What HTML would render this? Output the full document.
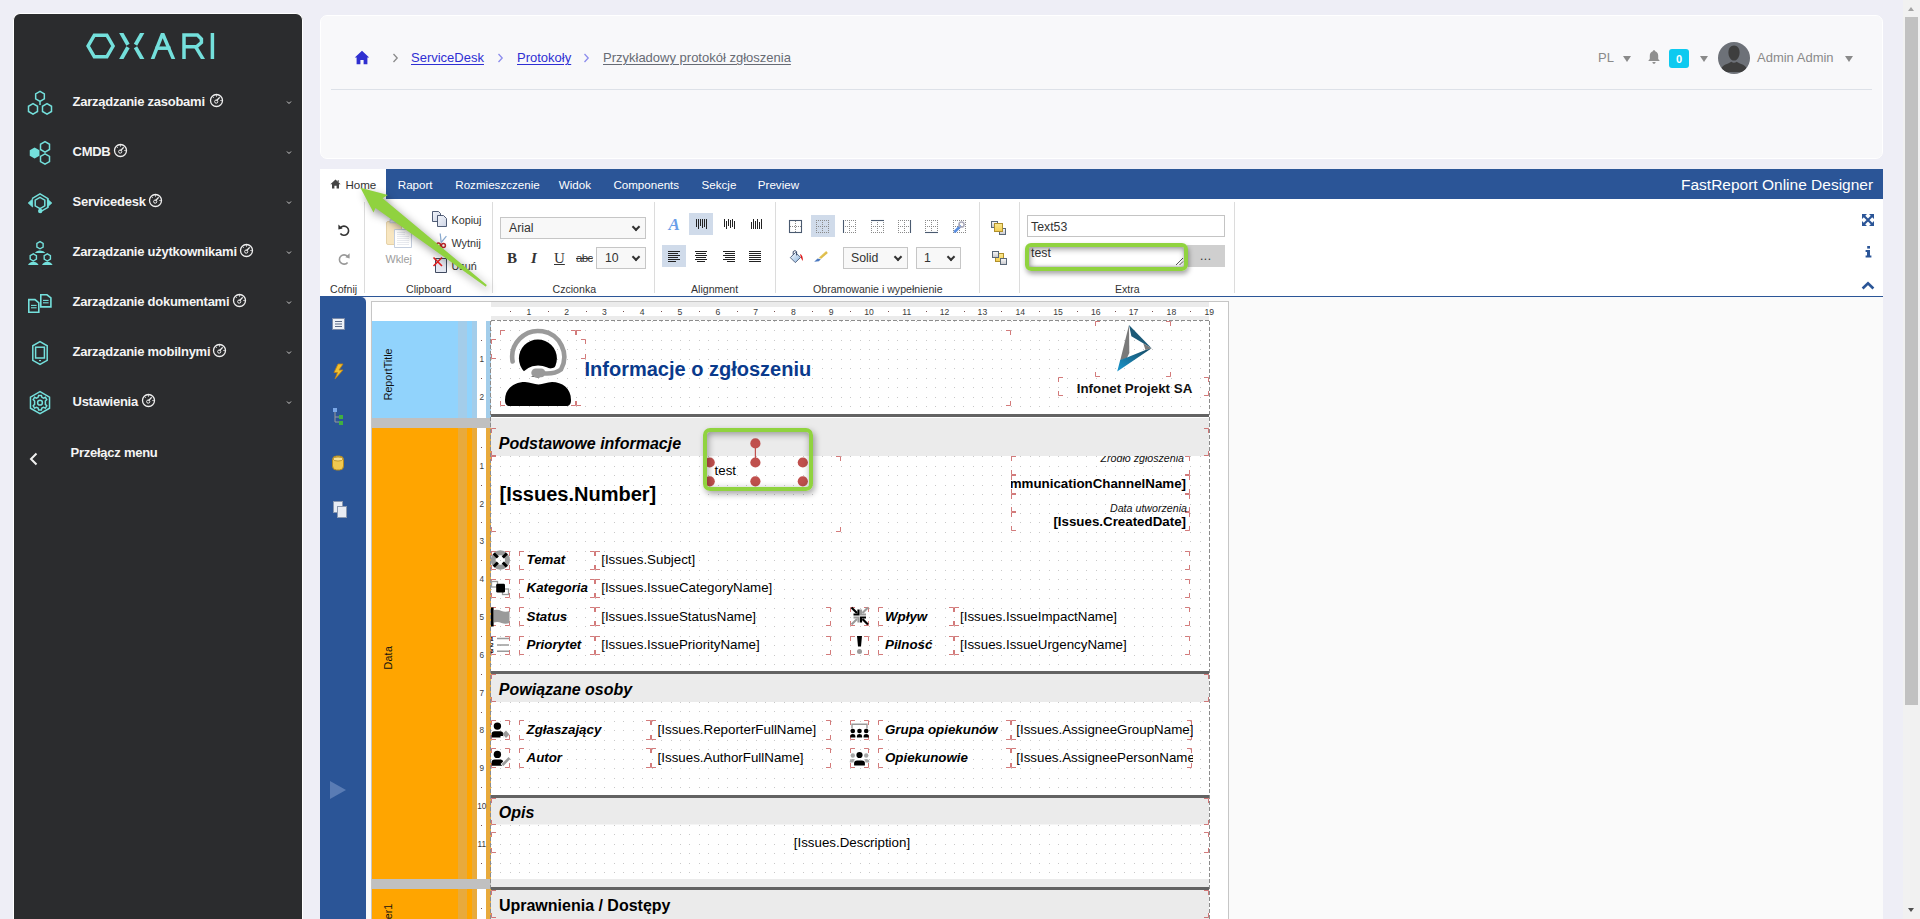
<!DOCTYPE html>
<html><head><meta charset="utf-8">
<style>
*{box-sizing:border-box}
html,body{margin:0;padding:0}
body{width:1920px;height:919px;overflow:hidden;background:#eeeef6;font-family:"Liberation Sans",sans-serif;position:relative}
.a{position:absolute}
/* sidebar */
#sb{left:13px;top:13px;width:290px;height:920px;background:#2b2c2e;border:1px solid #fff;border-bottom:none;border-radius:7px 7px 0 0}
.mi{position:absolute;left:72.5px;color:#f4f4f4;font-weight:bold;font-size:13px;letter-spacing:-0.25px;white-space:nowrap}
.mic{position:absolute;left:28px;width:24px;height:24px}
.chev{position:absolute;left:286px;width:6px;height:4px}
/* header */
#hd{left:320px;top:15px;width:1563px;height:144px;background:#f8f8fa;border:1px solid #fff;border-radius:7px}
/* tabbar */
#tb{left:320px;top:169px;width:1563px;height:30px;background:#2b5597}
.tab{position:absolute;top:178px;color:#fff;font-size:11.6px;white-space:nowrap}
#tool{left:320px;top:199px;width:1563px;height:98px;background:#fff;border-bottom:1px solid #2b5597}
.lbl{position:absolute;top:283px;font-size:10.6px;color:#333;white-space:nowrap}
.dv{position:absolute;top:202px;width:1px;height:91px;background:#dcdcdc}
#lp{left:320px;top:297px;width:46px;height:630px;background:#2b5597;border-top-right-radius:5px}
#da{left:366px;top:297px;width:1517px;height:630px;background:#fafafa}
#sbar{left:1903px;top:0;width:17px;height:919px;background:#f1f1f1}
.bc{top:50px;font-size:13px;text-decoration:underline;text-underline-offset:1.5px;white-space:nowrap}
.hr{top:50px;font-size:13px;color:#8a8a8a;white-space:nowrap}
.tri{top:55.5px;width:0;height:0;border-left:4px solid transparent;border-right:4px solid transparent;border-top:6px solid #8a8a8a}
.tl{font-size:10.8px;color:#333;white-space:nowrap}
.sel{background:#f8f8f8;border:1px solid #c6c6c6}
.sel span{position:absolute;font-size:12.3px;color:#333;white-space:nowrap}
.sel i{position:absolute;width:6px;height:6px;border-right:2px solid #333;border-bottom:2px solid #333;transform:rotate(45deg)}
</style></head><body>

<div id="sb" class="a"></div>
<svg class="a" style="left:0;top:0" width="320" height="480" viewBox="0 0 320 480">
<g fill="none" stroke="#74e0dc">
 <!-- logo -->
 <polygon points="113.10,46.00 106.85,35.17 94.35,35.17 88.10,46.00 94.35,56.83 106.85,56.83" stroke-width="3.5"/>
 <g stroke-width="3.8" stroke-linecap="butt">
  <clipPath id="lc"><rect x="80" y="33" width="140" height="26"/></clipPath>
  <g clip-path="url(#lc)">
   <line x1="119.6" y1="30" x2="128" y2="44.8"/>
   <line x1="128" y1="47.2" x2="119.6" y2="62"/>
   <line x1="143.9" y1="30" x2="135.5" y2="44.8"/>
   <line x1="135.5" y1="47.2" x2="143.9" y2="62"/>
  </g>
 </g>
 <g stroke-width="3.5" clip-path="url(#lc)">
  <polyline points="152.2,60 162.6,33.5 173.8,60" stroke-linejoin="miter"/>
  <line x1="155.5" y1="48.2" x2="170.5" y2="48.2"/>
  <polyline points="184,60 184,35 197.5,35 201.4,39 201.4,42.5 196.5,46.8 184,46.8"/>
  <line x1="195.5" y1="46.5" x2="203.6" y2="60"/>
  <line x1="212.4" y1="33" x2="212.4" y2="60"/>
 </g>
 <!-- icon1 -->
 <g stroke-width="1.5">
  <polygon points="40.00,91.40 35.67,93.90 35.67,98.90 40.00,101.40 44.33,98.90 44.33,93.90"/>
  <polygon points="33.00,103.70 28.50,106.30 28.50,111.50 33.00,114.10 37.50,111.50 37.50,106.30"/>
  <polygon points="47.00,103.70 42.50,106.30 42.50,111.50 47.00,114.10 51.50,111.50 51.50,106.30"/>
  <line x1="40" y1="101.4" x2="40" y2="105"/>
 </g>
 <!-- icon2 cmdb -->
 <polygon points="34.60,147.40 29.75,150.20 29.75,155.80 34.60,158.60 39.45,155.80 39.45,150.20" fill="#74e0dc" stroke="none"/>
 <g stroke-width="1.5">
  <polygon points="45.00,141.70 40.50,144.30 40.50,149.50 45.00,152.10 49.50,149.50 49.50,144.30"/>
  <polygon points="45.00,153.80 40.50,156.40 40.50,161.60 45.00,164.20 49.50,161.60 49.50,156.40"/>
 </g>
 <!-- icon3 servicedesk -->
 <g stroke-width="1.5">
  <polyline points="32,198.6 40,193.9 48,198.6 48,207.3 40.5,211.6"/>
  <polygon points="40,197.4 44.8,200.2 44.8,205.8 40,208.6 35.2,205.8 35.2,200.2"/>
  <line x1="40.2" y1="208.4" x2="40.2" y2="210.5"/>
 </g>
 <polygon points="28.2,203 32.6,199 32.6,207" fill="#74e0dc" stroke="#74e0dc" stroke-width="0.8" stroke-linejoin="round"/>
 <polygon points="51.8,203 47.4,199 47.4,207" fill="#74e0dc" stroke="#74e0dc" stroke-width="0.8" stroke-linejoin="round"/>
 <circle cx="40.2" cy="211" r="2.2" fill="#74e0dc" stroke="none"/>
 <!-- icon4 users -->
 <g stroke-width="1.4">
  <polygon points="40.00,241.60 36.88,243.40 36.88,247.00 40.00,248.80 43.12,247.00 43.12,243.40"/>
  <polygon points="33.30,253.80 30.18,255.60 30.18,259.20 33.30,261.00 36.42,259.20 36.42,255.60"/>
  <polygon points="47.30,253.80 44.18,255.60 44.18,259.20 47.30,261.00 50.42,259.20 50.42,255.60"/>
 </g>
 <g fill="#74e0dc" stroke="none">
  <path d="M35 253 Q36 250.6 40 250.4 Q44 250.6 45.4 253 Z"/>
  <path d="M28 265 Q29.3 262 33.3 261.8 Q37.3 262 38.6 265 Z"/>
  <path d="M42 265 Q43.3 262 47.3 261.8 Q51.3 262 52.6 265 Z"/>
 </g>
 <!-- icon5 docs -->
 <g stroke-width="1.6">
  <path d="M28.8 299.6 H35 L38.8 302.8 V312.2 H28.8 Z"/>
  <path d="M40.8 294.8 H47 L50.9 298 V306.9 H40.8 Z"/>
 </g>
 <g stroke-width="1.1">
  <line x1="31" y1="305.4" x2="36.6" y2="305.4"/><line x1="31" y1="307.8" x2="36.6" y2="307.8"/>
  <line x1="43" y1="300.4" x2="48.6" y2="300.4"/><line x1="43" y1="302.8" x2="48.6" y2="302.8"/>
 </g>
 <!-- icon6 mobile -->
 <g stroke-width="1.5">
  <polygon points="40,341.6 47.2,345.8 47.2,360.4 40,364.4 32.8,360.4 32.8,345.8"/>
  <rect x="35.6" y="347.2" width="8.8" height="10.8"/>
 </g>
 <rect x="39" y="360" width="2" height="1.2" fill="#74e0dc" stroke="none"/>
 <!-- icon7 settings -->
 <g stroke-width="1.5">
  <polygon points="40.00,391.70 30.47,397.20 30.47,408.20 40.00,413.70 49.53,408.20 49.53,397.20"/>
  <circle cx="40" cy="402.7" r="2.4"/>
  <path d="M38.6 395.4 L41.4 395.4 L41.9 397.3 L43.5 398.1 L45.4 397.3 L46.8 399.6 L45.4 401 L45.4 404.4 L46.8 405.8 L45.4 408.1 L43.5 407.3 L41.9 408.1 L41.4 410 L38.6 410 L38.1 408.1 L36.5 407.3 L34.6 408.1 L33.2 405.8 L34.6 404.4 L34.6 401 L33.2 399.6 L34.6 397.3 L36.5 398.1 L38.1 397.3 Z"/>
 </g>
</g>
<!-- chevrons -->
<g fill="none" stroke="#cfcfcf" stroke-width="1">
 <polyline points="287,101.5 289,103.5 291,101.5"/>
 <polyline points="287,151.5 289,153.5 291,151.5"/>
 <polyline points="287,201.5 289,203.5 291,201.5"/>
 <polyline points="287,251.5 289,253.5 291,251.5"/>
 <polyline points="287,301.5 289,303.5 291,301.5"/>
 <polyline points="287,351.5 289,353.5 291,351.5"/>
 <polyline points="287,401.5 289,403.5 291,401.5"/>
</g>
<polyline points="36.5,453.5 31,459 36.5,464.5" fill="none" stroke="#f0f0f0" stroke-width="2"/>
</svg>
<div class="mi" style="top:94px">Zarządzanie zasobami</div>
<svg class="a" style="left:208.5px;top:93.0px" width="15" height="15" viewBox="0 0 15 15"><circle cx="7.5" cy="7.5" r="6" fill="none" stroke="#eee" stroke-width="1.3"/><path d="M7.5 2.3 V3.6 M12.7 7.5 H11.4 M3.8 3.8 L4.7 4.7 M11.2 3.8 L10.3 4.7" stroke="#eee" stroke-width="1"/><path d="M10.4 4.6 L7.5 7.8" stroke="#eee" stroke-width="1.4"/><circle cx="7.2" cy="8.6" r="1.6" fill="none" stroke="#eee" stroke-width="1"/></svg>
<div class="mi" style="top:144px">CMDB</div>
<svg class="a" style="left:113.0px;top:143.0px" width="15" height="15" viewBox="0 0 15 15"><circle cx="7.5" cy="7.5" r="6" fill="none" stroke="#eee" stroke-width="1.3"/><path d="M7.5 2.3 V3.6 M12.7 7.5 H11.4 M3.8 3.8 L4.7 4.7 M11.2 3.8 L10.3 4.7" stroke="#eee" stroke-width="1"/><path d="M10.4 4.6 L7.5 7.8" stroke="#eee" stroke-width="1.4"/><circle cx="7.2" cy="8.6" r="1.6" fill="none" stroke="#eee" stroke-width="1"/></svg>
<div class="mi" style="top:194px">Servicedesk</div>
<svg class="a" style="left:148.1px;top:193.0px" width="15" height="15" viewBox="0 0 15 15"><circle cx="7.5" cy="7.5" r="6" fill="none" stroke="#eee" stroke-width="1.3"/><path d="M7.5 2.3 V3.6 M12.7 7.5 H11.4 M3.8 3.8 L4.7 4.7 M11.2 3.8 L10.3 4.7" stroke="#eee" stroke-width="1"/><path d="M10.4 4.6 L7.5 7.8" stroke="#eee" stroke-width="1.4"/><circle cx="7.2" cy="8.6" r="1.6" fill="none" stroke="#eee" stroke-width="1"/></svg>
<div class="mi" style="top:244px">Zarządzanie użytkownikami</div>
<svg class="a" style="left:238.6px;top:243.0px" width="15" height="15" viewBox="0 0 15 15"><circle cx="7.5" cy="7.5" r="6" fill="none" stroke="#eee" stroke-width="1.3"/><path d="M7.5 2.3 V3.6 M12.7 7.5 H11.4 M3.8 3.8 L4.7 4.7 M11.2 3.8 L10.3 4.7" stroke="#eee" stroke-width="1"/><path d="M10.4 4.6 L7.5 7.8" stroke="#eee" stroke-width="1.4"/><circle cx="7.2" cy="8.6" r="1.6" fill="none" stroke="#eee" stroke-width="1"/></svg>
<div class="mi" style="top:294px">Zarządzanie dokumentami</div>
<svg class="a" style="left:232.1px;top:293.0px" width="15" height="15" viewBox="0 0 15 15"><circle cx="7.5" cy="7.5" r="6" fill="none" stroke="#eee" stroke-width="1.3"/><path d="M7.5 2.3 V3.6 M12.7 7.5 H11.4 M3.8 3.8 L4.7 4.7 M11.2 3.8 L10.3 4.7" stroke="#eee" stroke-width="1"/><path d="M10.4 4.6 L7.5 7.8" stroke="#eee" stroke-width="1.4"/><circle cx="7.2" cy="8.6" r="1.6" fill="none" stroke="#eee" stroke-width="1"/></svg>
<div class="mi" style="top:344px">Zarządzanie mobilnymi</div>
<svg class="a" style="left:212.0px;top:343.0px" width="15" height="15" viewBox="0 0 15 15"><circle cx="7.5" cy="7.5" r="6" fill="none" stroke="#eee" stroke-width="1.3"/><path d="M7.5 2.3 V3.6 M12.7 7.5 H11.4 M3.8 3.8 L4.7 4.7 M11.2 3.8 L10.3 4.7" stroke="#eee" stroke-width="1"/><path d="M10.4 4.6 L7.5 7.8" stroke="#eee" stroke-width="1.4"/><circle cx="7.2" cy="8.6" r="1.6" fill="none" stroke="#eee" stroke-width="1"/></svg>
<div class="mi" style="top:394px">Ustawienia</div>
<svg class="a" style="left:141.3px;top:393.0px" width="15" height="15" viewBox="0 0 15 15"><circle cx="7.5" cy="7.5" r="6" fill="none" stroke="#eee" stroke-width="1.3"/><path d="M7.5 2.3 V3.6 M12.7 7.5 H11.4 M3.8 3.8 L4.7 4.7 M11.2 3.8 L10.3 4.7" stroke="#eee" stroke-width="1"/><path d="M10.4 4.6 L7.5 7.8" stroke="#eee" stroke-width="1.4"/><circle cx="7.2" cy="8.6" r="1.6" fill="none" stroke="#eee" stroke-width="1"/></svg>
<div class="mi" style="top:445px;left:70.5px">Przełącz menu</div>
<div id="hd" class="a"></div>

<!-- breadcrumb -->
<svg class="a" style="left:354px;top:50px" width="16" height="15" viewBox="0 0 16 15"><path d="M8 0.8 L15.2 7.6 L13.4 7.6 L13.4 14.2 L9.6 14.2 L9.6 10 L6.4 10 L6.4 14.2 L2.6 14.2 L2.6 7.6 L0.8 7.6 Z" fill="#2f2fd0"/></svg>
<svg class="a" style="left:392px;top:53px" width="7" height="10" viewBox="0 0 7 10"><polyline points="1.5,1 5.2,5 1.5,9" fill="none" stroke="#8a8a8a" stroke-width="1.3"/></svg>
<div class="a bc" style="left:411px;color:#2f2fd3">ServiceDesk</div>
<svg class="a" style="left:497px;top:53px" width="7" height="10" viewBox="0 0 7 10"><polyline points="1.5,1 5.2,5 1.5,9" fill="none" stroke="#8c8cec" stroke-width="1.3"/></svg>
<div class="a bc" style="left:517px;color:#2f2fd3">Protokoły</div>
<svg class="a" style="left:583px;top:53px" width="7" height="10" viewBox="0 0 7 10"><polyline points="1.5,1 5.2,5 1.5,9" fill="none" stroke="#8c8cec" stroke-width="1.3"/></svg>
<div class="a bc" style="left:603px;color:#676b74">Przykładowy protokół zgłoszenia</div>
<div class="a" style="left:331px;top:89px;width:1541px;height:1px;background:#dde1e8"></div>
<!-- right -->
<div class="a hr" style="left:1598px">PL</div>
<div class="a tri" style="left:1623px"></div>
<svg class="a" style="left:1647px;top:49px" width="14" height="16" viewBox="0 0 14 16"><path d="M7 1.2 C7.8 1.2 8.2 1.7 8.2 2.3 C10.3 2.9 11.2 4.6 11.2 6.8 L11.2 10 L12.8 12 L1.2 12 L2.8 10 L2.8 6.8 C2.8 4.6 3.7 2.9 5.8 2.3 C5.8 1.7 6.2 1.2 7 1.2 Z M5.4 13 L8.6 13 C8.6 14 7.9 14.8 7 14.8 C6.1 14.8 5.4 14 5.4 13 Z" fill="#8f8f8f"/></svg>
<div class="a" style="left:1669px;top:49px;width:20px;height:19px;background:#0dcaf0;border-radius:3px;color:#fff;font-weight:bold;font-size:11px;text-align:center;line-height:20px">0</div>
<div class="a tri" style="left:1700px"></div>
<svg class="a" style="left:1718px;top:42px" width="32" height="32" viewBox="0 0 32 32"><defs><clipPath id="av"><circle cx="16" cy="16" r="16"/></clipPath></defs><circle cx="16" cy="16" r="16" fill="#6d7178"/><g clip-path="url(#av)" fill="#3e3e3e"><path d="M16 3.5 C19.6 3.5 21.6 6.4 21.6 10.5 C21.6 14.4 19.5 18.6 16 18.6 C12.5 18.6 10.4 14.4 10.4 10.5 C10.4 6.4 12.4 3.5 16 3.5 Z"/><path d="M2 30 C3 24.4 6 23 10.6 21.2 L13.4 19.8 C15 21.2 17 21.2 18.6 19.8 L21.4 21.2 C26 23 29 24.4 30 30 Z"/></g></svg>
<div class="a hr" style="left:1757px">Admin Admin</div>
<div class="a tri" style="left:1845px"></div>
<div id="tb" class="a"></div>
<div id="tool" class="a"></div>
<div class="a" style="left:320px;top:169px;width:66px;height:30px;background:#fff"></div>
<svg class="a" style="left:330px;top:179px" width="11" height="10" viewBox="0 0 11 10"><path d="M5.5 0.6 L10.6 5.2 L9 5.2 L9 9.6 L6.6 9.6 L6.6 6.8 L4.4 6.8 L4.4 9.6 L2 9.6 L2 5.2 L0.4 5.2 Z M7.6 1.2 H8.8 V3.2 L7.6 2.2 Z" fill="#444"/></svg>
<div class="tab" style="left:345.4px;color:#333">Home</div>
<div class="tab" style="left:397.8px">Raport</div>
<div class="tab" style="left:455.3px">Rozmieszczenie</div>
<div class="tab" style="left:558.75px">Widok</div>
<div class="tab" style="left:613.4px">Components</div>
<div class="tab" style="left:701.6px">Sekcje</div>
<div class="tab" style="left:757.8px">Preview</div>
<div class="tab" style="left:1681px;top:176px;font-size:15.5px">FastReport Online Designer</div>

<!-- dividers -->
<div class="dv" style="left:364px"></div>
<div class="dv" style="left:492px"></div>
<div class="dv" style="left:654px"></div>
<div class="dv" style="left:775px"></div>
<div class="dv" style="left:979px"></div>
<div class="dv" style="left:1019px"></div>
<div class="dv" style="left:1234px"></div>
<!-- labels -->
<div class="lbl" style="left:330px">Cofnij</div>
<div class="lbl" style="left:406px">Clipboard</div>
<div class="lbl" style="left:552.5px">Czcionka</div>
<div class="lbl" style="left:691px">Alignment</div>
<div class="lbl" style="left:813px">Obramowanie i wypełnienie</div>
<div class="lbl" style="left:1115px">Extra</div>
<!-- undo redo -->
<svg class="a" style="left:336px;top:222px" width="16" height="44" viewBox="0 0 16 44">
 <path d="M4.6 5.6 A4.6 4.6 0 1 1 4.4 11.6" fill="none" stroke="#333" stroke-width="1.6"/>
 <path d="M2.4 2.4 L6.6 6.4 L2.4 7.6 Z" fill="#333"/>
 <path d="M11.4 34.4 A4.6 4.6 0 1 0 11.6 40.4" fill="none" stroke="#999" stroke-width="1.6"/>
 <path d="M13.6 31.2 L9.4 35.2 L13.6 36.4 Z" fill="#999"/>
</svg>
<!-- paste -->
<svg class="a" style="left:385px;top:219px" width="28" height="30" viewBox="0 0 28 30">
 <rect x="1.5" y="2.5" width="15" height="23" rx="1.5" fill="#f8e6c0" stroke="#e6d2a8"/>
 <rect x="5" y="0.8" width="8" height="3" fill="#e8e8f0" stroke="#bcc4d4" stroke-width="0.8"/>
 <path d="M9.5 10.5 H22.5 L26.5 14.5 V28.5 H9.5 Z" fill="#fff" stroke="#c4cede"/>
 <g stroke="#d8dce4" stroke-width="0.6"><line x1="12" y1="13.5" x2="20" y2="13.5"/><line x1="12" y1="15.5" x2="20" y2="15.5"/><line x1="12" y1="17.5" x2="24" y2="17.5"/><line x1="12" y1="19.5" x2="24" y2="19.5"/><line x1="12" y1="21.5" x2="24" y2="21.5"/><line x1="12" y1="23.5" x2="24" y2="23.5"/><line x1="12" y1="25.5" x2="24" y2="25.5"/></g>
</svg>
<div class="a" style="left:385.5px;top:252.5px;font-size:10.8px;color:#9c9c9c">Wklej</div>
<!-- copy -->
<svg class="a" style="left:431px;top:210px" width="18" height="18" viewBox="0 0 18 18">
 <defs><linearGradient id="dq" x1="0" y1="0" x2="1" y2="1"><stop offset="0" stop-color="#f4f6fb"/><stop offset="1" stop-color="#cdd4e4"/></linearGradient></defs>
 <path d="M1.5 1.5 H7.5 L9.5 3.5 V11.5 H1.5 Z" fill="url(#dq)" stroke="#3e4c68" stroke-width="0.9"/>
 <path d="M6.5 5.5 H12.5 L15.5 8.5 V16.5 H6.5 Z" fill="url(#dq)" stroke="#3e4c68" stroke-width="0.9"/>
</svg>
<div class="a tl" style="left:451.5px;top:213.5px">Kopiuj</div>
<!-- cut -->
<svg class="a" style="left:432px;top:232px" width="18" height="20" viewBox="432 232 18 20">
 <path d="M440.2 233.5 L441.2 242.5" stroke="#8aaad0" stroke-width="1.2" fill="none"/>
 <path d="M446.4 236.2 L441.2 242.5" stroke="#8aaad0" stroke-width="1.2" fill="none"/>
 <circle cx="438.4" cy="245" r="2" fill="none" stroke="#c02828" stroke-width="1.5"/>
 <circle cx="443.4" cy="245.6" r="2" fill="none" stroke="#c02828" stroke-width="1.5"/>
</svg>
<div class="a tl" style="left:451.5px;top:236.5px">Wytnij</div>
<!-- delete -->
<svg class="a" style="left:432px;top:256px" width="17" height="18" viewBox="0 0 17 18">
 <path d="M3.5 2.5 H14.5 V16.5 H3.5 Z" fill="#e4e8f2" stroke="#404a60"/>
 <path d="M1.5 1.5 L10 10 M10 1.5 L1.5 10" stroke="#e02020" stroke-width="1.6"/>
</svg>
<div class="a tl" style="left:451.5px;top:259.5px">Usuń</div>
<!-- font -->
<div class="a sel" style="left:500px;top:217px;width:146px;height:22px"><span style="left:8px;top:3px">Arial</span><i style="left:132px;top:6px"></i></div>
<div class="a sel" style="left:596px;top:247px;width:50px;height:22px"><span style="left:8px;top:3px">10</span><i style="left:36px;top:6px"></i></div>
<div class="a" style="left:507px;top:250px;font-family:'Liberation Serif';font-weight:bold;font-size:15px;color:#333">B</div>
<div class="a" style="left:531px;top:250px;font-family:'Liberation Serif';font-style:italic;font-weight:bold;font-size:15px;color:#333">I</div>
<div class="a" style="left:554px;top:250px;font-family:'Liberation Serif';font-size:15px;color:#333;text-decoration:underline">U</div>
<div class="a" style="left:576px;top:252px;font-size:11.5px;color:#333;text-decoration:line-through;letter-spacing:-0.6px">abc</div>
<!-- alignment -->
<div class="a" style="left:689px;top:213px;width:24px;height:22px;background:#d0dbea"></div>
<div class="a" style="left:662px;top:245px;width:24px;height:22px;background:#d0dbea"></div>
<svg class="a" style="left:664px;top:213px" width="110" height="56" viewBox="0 0 110 56">
 <text x="4.5" y="16.5" font-family="Liberation Serif" font-style="italic" font-weight="bold" font-size="17" fill="#6a9ee8">A</text>
 <g stroke="#222" stroke-width="1">
  <path d="M32.5 6 V14 M34.5 6 V16 M36.5 6 V13 M38.5 6 V15 M40.5 6 V14 M42.5 6 V16"/>
  <path d="M60.5 6 V14 M62.5 8 V16 M64.5 6 V13 M66.5 7 V15 M68.5 6 V14 M70.5 8 V16"/>
  <path d="M87.5 9 V16 M89.5 6 V16 M91.5 8 V16 M93.5 6 V16 M95.5 9 V16 M97.5 6 V16"/>
 </g>
 <g stroke="#222" stroke-width="1">
  <path d="M4 38.5 H16 M4 40.5 H14 M4 42.5 H16 M4 44.5 H14 M4 46.5 H16 M4 48.5 H12"/>
  <path d="M31 38.5 H43 M32 40.5 H42 M31 42.5 H43 M32 44.5 H42 M31 46.5 H43 M33 48.5 H41"/>
  <path d="M59 38.5 H71 M61 40.5 H71 M59 42.5 H71 M61 44.5 H71 M59 46.5 H71 M63 48.5 H71"/>
  <path d="M85 38.5 H97 M85 40.5 H97 M85 42.5 H97 M85 44.5 H97 M85 46.5 H97 M85 48.5 H97"/>
 </g>
</svg>
<!-- border -->
<div class="a" style="left:811px;top:215px;width:24px;height:22px;background:#d0dbea"></div>
<svg class="a" style="left:788px;top:219px" width="180" height="16" viewBox="0 0 180 16">
 <g fill="none" stroke="#8a8a8a" stroke-width="1" stroke-dasharray="1 1"><path d="M2 7.5 H13 M7.5 2 V13"/><path d="M28 1.5 H41 M28 13.5 H41 M28 7.5 H41 M28.5 1 V14 M40.5 1 V14 M34.5 1 V14"/><path d="M55 1.5 H68 M55 13.5 H68 M55 7.5 H68 M55.5 1 V14 M67.5 1 V14 M61.5 1 V14"/><path d="M83 1.5 H96 M83 13.5 H96 M83 7.5 H96 M83.5 1 V14 M95.5 1 V14 M89.5 1 V14"/><path d="M110 1.5 H123 M110 13.5 H123 M110 7.5 H123 M110.5 1 V14 M122.5 1 V14 M116.5 1 V14"/><path d="M137 1.5 H150 M137 13.5 H150 M137 7.5 H150 M137.5 1 V14 M149.5 1 V14 M143.5 1 V14"/><path d="M165 1.5 H178 M165 13.5 H178 M165 7.5 H178 M165.5 1 V14 M177.5 1 V14 M171.5 1 V14"/></g>
 <g fill="none" stroke="#4a5a70" stroke-width="1.1">
  <rect x="1.5" y="1.5" width="12" height="12"/>
  <path d="M55.5 1 V14"/><path d="M83 1.5 H96"/><path d="M122.5 1 V14"/><path d="M137 13.5 H150"/>
 </g>
 <path d="M167 12.5 L172 7.5" stroke="#5a8ee0" stroke-width="2.6" stroke-linecap="round"/>
 <circle cx="173.5" cy="5.5" r="2.6" fill="none" stroke="#aab" stroke-width="1.5"/>
</svg>
<svg class="a" style="left:785px;top:244px" width="50" height="26" viewBox="785 244 50 26">
 <defs><linearGradient id="bk" x1="0" y1="0" x2="1" y2="1"><stop offset="0" stop-color="#ffffff"/><stop offset="1" stop-color="#8ab4e0"/></linearGradient>
 <linearGradient id="br" x1="0" y1="0" x2="1" y2="1"><stop offset="0" stop-color="#f8e880"/><stop offset="1" stop-color="#c89820"/></linearGradient></defs>
 <path d="M790.3 257.6 L795.5 252.5 L800.6 257.4 L795.3 262.6 Z" fill="url(#bk)" stroke="#4a5a78" stroke-width="0.9"/>
 <path d="M793.2 254.6 V251.6 Q795 249.6 796.6 251.6 V255.4" fill="none" stroke="#3a4a6a" stroke-width="1"/>
 <path d="M800 254 Q803.4 255.5 802.6 261 L801.2 258.2 Z" fill="#e01010"/>
 <path d="M814.2 261.8 L817.6 258.4 L820.8 259 L819 261.2 Z" fill="#4a78c0"/>
 <path d="M817.6 258.4 L819 257.4 L821.2 258.8 L820.8 259 Z" fill="#f0e8c8"/>
 <path d="M819 257.4 L826.2 251 L827.8 253 L821.2 258.8 Z" fill="url(#br)"/>
</svg>
<div class="a sel" style="left:843px;top:247px;width:65px;height:22px"><span style="left:7px;top:3px">Solid</span><i style="left:51px;top:6px"></i></div>
<div class="a sel" style="left:916px;top:247px;width:45px;height:22px"><span style="left:7px;top:3px">1</span><i style="left:31px;top:6px"></i></div>
<!-- layers -->
<svg class="a" style="left:984px;top:214px" width="30" height="56" viewBox="984 214 30 56">
 <defs><linearGradient id="gq" x1="0" y1="0" x2="0" y2="1"><stop offset="0" stop-color="#fafafa"/><stop offset="1" stop-color="#c8c8cc"/></linearGradient>
 <linearGradient id="yq" x1="0" y1="0" x2="0" y2="1"><stop offset="0" stop-color="#fbe890"/><stop offset="1" stop-color="#f0cc50"/></linearGradient></defs>
 <g stroke-width="1">
  <rect x="991.5" y="221.5" width="6" height="6" fill="url(#gq)" stroke="#5a6878"/>
  <rect x="999.5" y="228.5" width="6" height="6" fill="url(#gq)" stroke="#5a6878"/>
  <rect x="994.5" y="223.5" width="8" height="8" fill="url(#yq)" stroke="#b0902c"/>
  <rect x="995.5" y="253.5" width="8" height="8" fill="url(#yq)" stroke="#b0902c"/>
  <rect x="992.5" y="251.5" width="6" height="6" fill="url(#gq)" stroke="#5a6878"/>
  <rect x="1000.5" y="258.5" width="6" height="6" fill="url(#gq)" stroke="#5a6878"/>
 </g>
</svg>
<!-- extra -->
<div class="a" style="left:1027px;top:215px;width:198px;height:22px;background:#fff;border:1px solid #c4c4c4"></div>
<div class="a" style="left:1031px;top:220px;font-size:12.3px;color:#333">Text53</div>
<div class="a" style="left:1187px;top:245px;width:38px;height:22px;background:#cfcfcf"></div>
<div class="a" style="left:1200px;top:249px;font-size:12px;color:#333;letter-spacing:0.5px">...</div>
<div class="a" style="left:1028px;top:246px;width:157px;height:21px;background:#fff;box-shadow:inset 0 0 3px rgba(0,0,0,0.35)"></div>
<div class="a" style="left:1031px;top:246px;font-size:12.3px;color:#333">test</div>
<svg class="a" style="left:1174px;top:256px" width="10" height="10" viewBox="0 0 10 10"><path d="M9 2 L2 9 M9 5.5 L5.5 9" stroke="#555" stroke-width="1"/></svg>
<div class="a" style="left:1025px;top:243px;width:163px;height:28px;border:4px solid #90d33f;border-radius:6px;box-shadow:1px 3px 5px rgba(0,0,0,0.35), inset 1px 2px 6px rgba(0,0,0,0.4)"></div>
<!-- right icons -->
<svg class="a" style="left:1861px;top:213px" width="14" height="78" viewBox="0 0 14 78">
 <g fill="#2b5597">
  <path d="M3 3 L11 11 M11 3 L3 11" stroke="#2b5597" stroke-width="2.2"/>
  <path d="M1 1 H6 L1 6 Z M13 1 V6 L8 1 Z M1 13 V8 L6 13 Z M13 13 H8 L13 8 Z"/>
  <rect x="6.2" y="33" width="2.8" height="2.6"/><path d="M4.6 37 H9 V42.6 H10.4 V44.6 H4.6 V42.6 H6 V39 H4.6 Z"/>
 </g>
 <polyline points="1.6,75.5 7,70.2 12.4,75.5" fill="none" stroke="#2b5597" stroke-width="2.6"/>
</svg>
<div id="lp" class="a"></div>
<div id="da" class="a"></div>
<svg class="a" style="left:0;top:0" width="1920" height="919" viewBox="0 0 1920 919" font-family="Liberation Sans"><rect x="371.5" y="301.5" width="857" height="640" fill="#fff" stroke="#c6c6c6" stroke-width="1"/>
<rect x="372" y="321" width="105" height="97" fill="#91d3fc"/>
<rect x="458" y="321" width="9" height="97" fill="#a3cdea"/>
<rect x="472" y="321" width="5" height="97" fill="#a3cdea"/>
<rect x="486" y="321" width="5" height="97" fill="#a3cdea"/>
<rect x="372" y="428" width="105" height="451" fill="#ffa500"/>
<rect x="458" y="428" width="9" height="451" fill="#e8aa3c"/>
<rect x="472" y="428" width="5" height="451" fill="#e8aa3c"/>
<rect x="486" y="428" width="5" height="451" fill="#e8aa3c"/>
<rect x="372" y="889" width="105" height="36" fill="#ffa500"/>
<rect x="458" y="889" width="9" height="36" fill="#e8aa3c"/>
<rect x="472" y="889" width="5" height="36" fill="#e8aa3c"/>
<rect x="486" y="889" width="5" height="36" fill="#e8aa3c"/>
<rect x="372" y="418" width="119" height="10" fill="#c0c0c0"/>
<rect x="372" y="879" width="119" height="10" fill="#c0c0c0"/>
<text transform="translate(392.2,400.3) rotate(-90)" font-size="10.67" fill="#111">ReportTitle</text>
<text transform="translate(392.3,669.6) rotate(-90)" font-size="10.67" fill="#111" letter-spacing="0.3">Data</text>
<text transform="translate(392.3,963) rotate(-90)" font-size="10.67" fill="#111">DataFooter1</text>
<rect x="491" y="302" width="718" height="5" fill="#ebebeb"/>
<rect x="491" y="316" width="718" height="4" fill="#ebebeb"/>
<g font-size="8.6" fill="#3a3a3a" font-family="Liberation Sans"><text x="528.8" y="315" text-anchor="middle">1</text><rect x="510" y="311" width="1" height="1" fill="#7a5050"/><text x="566.6" y="315" text-anchor="middle">2</text><rect x="548" y="311" width="1" height="1" fill="#7a5050"/><text x="604.4" y="315" text-anchor="middle">3</text><rect x="586" y="311" width="1" height="1" fill="#7a5050"/><text x="642.2" y="315" text-anchor="middle">4</text><rect x="623" y="311" width="1" height="1" fill="#7a5050"/><text x="680.0" y="315" text-anchor="middle">5</text><rect x="661" y="311" width="1" height="1" fill="#7a5050"/><text x="717.8" y="315" text-anchor="middle">6</text><rect x="699" y="311" width="1" height="1" fill="#7a5050"/><text x="755.6" y="315" text-anchor="middle">7</text><rect x="737" y="311" width="1" height="1" fill="#7a5050"/><text x="793.4" y="315" text-anchor="middle">8</text><rect x="774" y="311" width="1" height="1" fill="#7a5050"/><text x="831.2" y="315" text-anchor="middle">9</text><rect x="812" y="311" width="1" height="1" fill="#7a5050"/><text x="869.0" y="315" text-anchor="middle">10</text><rect x="850" y="311" width="1" height="1" fill="#7a5050"/><text x="906.8" y="315" text-anchor="middle">11</text><rect x="888" y="311" width="1" height="1" fill="#7a5050"/><text x="944.6" y="315" text-anchor="middle">12</text><rect x="926" y="311" width="1" height="1" fill="#7a5050"/><text x="982.4" y="315" text-anchor="middle">13</text><rect x="964" y="311" width="1" height="1" fill="#7a5050"/><text x="1020.2" y="315" text-anchor="middle">14</text><rect x="1001" y="311" width="1" height="1" fill="#7a5050"/><text x="1058.0" y="315" text-anchor="middle">15</text><rect x="1039" y="311" width="1" height="1" fill="#7a5050"/><text x="1095.8" y="315" text-anchor="middle">16</text><rect x="1077" y="311" width="1" height="1" fill="#7a5050"/><text x="1133.6" y="315" text-anchor="middle">17</text><rect x="1115" y="311" width="1" height="1" fill="#7a5050"/><text x="1171.4" y="315" text-anchor="middle">18</text><rect x="1152" y="311" width="1" height="1" fill="#7a5050"/><text x="1209.2" y="315" text-anchor="middle">19</text><rect x="1190" y="311" width="1" height="1" fill="#7a5050"/></g>
<g font-size="8.2" fill="#3a3a3a"><rect x="481" y="340" width="1" height="1" fill="#7a5050"/><text x="481.8" y="361.8" text-anchor="middle">1</text><rect x="481" y="378" width="1" height="1" fill="#7a5050"/><text x="481.8" y="399.6" text-anchor="middle">2</text><rect x="481" y="447" width="1" height="1" fill="#7a5050"/><text x="481.8" y="468.8" text-anchor="middle">1</text><rect x="481" y="485" width="1" height="1" fill="#7a5050"/><text x="481.8" y="506.6" text-anchor="middle">2</text><rect x="481" y="522" width="1" height="1" fill="#7a5050"/><text x="481.8" y="544.4" text-anchor="middle">3</text><rect x="481" y="560" width="1" height="1" fill="#7a5050"/><text x="481.8" y="582.2" text-anchor="middle">4</text><rect x="481" y="598" width="1" height="1" fill="#7a5050"/><text x="481.8" y="620.0" text-anchor="middle">5</text><rect x="481" y="636" width="1" height="1" fill="#7a5050"/><text x="481.8" y="657.8" text-anchor="middle">6</text><rect x="481" y="674" width="1" height="1" fill="#7a5050"/><text x="481.8" y="695.6" text-anchor="middle">7</text><rect x="481" y="712" width="1" height="1" fill="#7a5050"/><text x="481.8" y="733.4" text-anchor="middle">8</text><rect x="481" y="749" width="1" height="1" fill="#7a5050"/><text x="481.8" y="771.2" text-anchor="middle">9</text><rect x="481" y="787" width="1" height="1" fill="#7a5050"/><text x="481.8" y="809.0" text-anchor="middle">10</text><rect x="481" y="825" width="1" height="1" fill="#7a5050"/><text x="481.8" y="846.8" text-anchor="middle">11</text><rect x="481" y="863" width="1" height="1" fill="#7a5050"/><rect x="481" y="908" width="1" height="1" fill="#7a5050"/></g>
<defs><pattern id="g1" x="491" y="321" width="189" height="189" patternUnits="userSpaceOnUse"><path d="M0 0h1v1h-1zM0 9h1v1h-1zM0 19h1v1h-1zM0 28h1v1h-1zM0 38h1v1h-1zM0 47h1v1h-1zM0 57h1v1h-1zM0 66h1v1h-1zM0 76h1v1h-1zM0 85h1v1h-1zM0 94h1v1h-1zM0 104h1v1h-1zM0 113h1v1h-1zM0 123h1v1h-1zM0 132h1v1h-1zM0 142h1v1h-1zM0 151h1v1h-1zM0 161h1v1h-1zM0 170h1v1h-1zM0 180h1v1h-1zM9 0h1v1h-1zM9 9h1v1h-1zM9 19h1v1h-1zM9 28h1v1h-1zM9 38h1v1h-1zM9 47h1v1h-1zM9 57h1v1h-1zM9 66h1v1h-1zM9 76h1v1h-1zM9 85h1v1h-1zM9 94h1v1h-1zM9 104h1v1h-1zM9 113h1v1h-1zM9 123h1v1h-1zM9 132h1v1h-1zM9 142h1v1h-1zM9 151h1v1h-1zM9 161h1v1h-1zM9 170h1v1h-1zM9 180h1v1h-1zM19 0h1v1h-1zM19 9h1v1h-1zM19 19h1v1h-1zM19 28h1v1h-1zM19 38h1v1h-1zM19 47h1v1h-1zM19 57h1v1h-1zM19 66h1v1h-1zM19 76h1v1h-1zM19 85h1v1h-1zM19 94h1v1h-1zM19 104h1v1h-1zM19 113h1v1h-1zM19 123h1v1h-1zM19 132h1v1h-1zM19 142h1v1h-1zM19 151h1v1h-1zM19 161h1v1h-1zM19 170h1v1h-1zM19 180h1v1h-1zM28 0h1v1h-1zM28 9h1v1h-1zM28 19h1v1h-1zM28 28h1v1h-1zM28 38h1v1h-1zM28 47h1v1h-1zM28 57h1v1h-1zM28 66h1v1h-1zM28 76h1v1h-1zM28 85h1v1h-1zM28 94h1v1h-1zM28 104h1v1h-1zM28 113h1v1h-1zM28 123h1v1h-1zM28 132h1v1h-1zM28 142h1v1h-1zM28 151h1v1h-1zM28 161h1v1h-1zM28 170h1v1h-1zM28 180h1v1h-1zM38 0h1v1h-1zM38 9h1v1h-1zM38 19h1v1h-1zM38 28h1v1h-1zM38 38h1v1h-1zM38 47h1v1h-1zM38 57h1v1h-1zM38 66h1v1h-1zM38 76h1v1h-1zM38 85h1v1h-1zM38 94h1v1h-1zM38 104h1v1h-1zM38 113h1v1h-1zM38 123h1v1h-1zM38 132h1v1h-1zM38 142h1v1h-1zM38 151h1v1h-1zM38 161h1v1h-1zM38 170h1v1h-1zM38 180h1v1h-1zM47 0h1v1h-1zM47 9h1v1h-1zM47 19h1v1h-1zM47 28h1v1h-1zM47 38h1v1h-1zM47 47h1v1h-1zM47 57h1v1h-1zM47 66h1v1h-1zM47 76h1v1h-1zM47 85h1v1h-1zM47 94h1v1h-1zM47 104h1v1h-1zM47 113h1v1h-1zM47 123h1v1h-1zM47 132h1v1h-1zM47 142h1v1h-1zM47 151h1v1h-1zM47 161h1v1h-1zM47 170h1v1h-1zM47 180h1v1h-1zM57 0h1v1h-1zM57 9h1v1h-1zM57 19h1v1h-1zM57 28h1v1h-1zM57 38h1v1h-1zM57 47h1v1h-1zM57 57h1v1h-1zM57 66h1v1h-1zM57 76h1v1h-1zM57 85h1v1h-1zM57 94h1v1h-1zM57 104h1v1h-1zM57 113h1v1h-1zM57 123h1v1h-1zM57 132h1v1h-1zM57 142h1v1h-1zM57 151h1v1h-1zM57 161h1v1h-1zM57 170h1v1h-1zM57 180h1v1h-1zM66 0h1v1h-1zM66 9h1v1h-1zM66 19h1v1h-1zM66 28h1v1h-1zM66 38h1v1h-1zM66 47h1v1h-1zM66 57h1v1h-1zM66 66h1v1h-1zM66 76h1v1h-1zM66 85h1v1h-1zM66 94h1v1h-1zM66 104h1v1h-1zM66 113h1v1h-1zM66 123h1v1h-1zM66 132h1v1h-1zM66 142h1v1h-1zM66 151h1v1h-1zM66 161h1v1h-1zM66 170h1v1h-1zM66 180h1v1h-1zM76 0h1v1h-1zM76 9h1v1h-1zM76 19h1v1h-1zM76 28h1v1h-1zM76 38h1v1h-1zM76 47h1v1h-1zM76 57h1v1h-1zM76 66h1v1h-1zM76 76h1v1h-1zM76 85h1v1h-1zM76 94h1v1h-1zM76 104h1v1h-1zM76 113h1v1h-1zM76 123h1v1h-1zM76 132h1v1h-1zM76 142h1v1h-1zM76 151h1v1h-1zM76 161h1v1h-1zM76 170h1v1h-1zM76 180h1v1h-1zM85 0h1v1h-1zM85 9h1v1h-1zM85 19h1v1h-1zM85 28h1v1h-1zM85 38h1v1h-1zM85 47h1v1h-1zM85 57h1v1h-1zM85 66h1v1h-1zM85 76h1v1h-1zM85 85h1v1h-1zM85 94h1v1h-1zM85 104h1v1h-1zM85 113h1v1h-1zM85 123h1v1h-1zM85 132h1v1h-1zM85 142h1v1h-1zM85 151h1v1h-1zM85 161h1v1h-1zM85 170h1v1h-1zM85 180h1v1h-1zM94 0h1v1h-1zM94 9h1v1h-1zM94 19h1v1h-1zM94 28h1v1h-1zM94 38h1v1h-1zM94 47h1v1h-1zM94 57h1v1h-1zM94 66h1v1h-1zM94 76h1v1h-1zM94 85h1v1h-1zM94 94h1v1h-1zM94 104h1v1h-1zM94 113h1v1h-1zM94 123h1v1h-1zM94 132h1v1h-1zM94 142h1v1h-1zM94 151h1v1h-1zM94 161h1v1h-1zM94 170h1v1h-1zM94 180h1v1h-1zM104 0h1v1h-1zM104 9h1v1h-1zM104 19h1v1h-1zM104 28h1v1h-1zM104 38h1v1h-1zM104 47h1v1h-1zM104 57h1v1h-1zM104 66h1v1h-1zM104 76h1v1h-1zM104 85h1v1h-1zM104 94h1v1h-1zM104 104h1v1h-1zM104 113h1v1h-1zM104 123h1v1h-1zM104 132h1v1h-1zM104 142h1v1h-1zM104 151h1v1h-1zM104 161h1v1h-1zM104 170h1v1h-1zM104 180h1v1h-1zM113 0h1v1h-1zM113 9h1v1h-1zM113 19h1v1h-1zM113 28h1v1h-1zM113 38h1v1h-1zM113 47h1v1h-1zM113 57h1v1h-1zM113 66h1v1h-1zM113 76h1v1h-1zM113 85h1v1h-1zM113 94h1v1h-1zM113 104h1v1h-1zM113 113h1v1h-1zM113 123h1v1h-1zM113 132h1v1h-1zM113 142h1v1h-1zM113 151h1v1h-1zM113 161h1v1h-1zM113 170h1v1h-1zM113 180h1v1h-1zM123 0h1v1h-1zM123 9h1v1h-1zM123 19h1v1h-1zM123 28h1v1h-1zM123 38h1v1h-1zM123 47h1v1h-1zM123 57h1v1h-1zM123 66h1v1h-1zM123 76h1v1h-1zM123 85h1v1h-1zM123 94h1v1h-1zM123 104h1v1h-1zM123 113h1v1h-1zM123 123h1v1h-1zM123 132h1v1h-1zM123 142h1v1h-1zM123 151h1v1h-1zM123 161h1v1h-1zM123 170h1v1h-1zM123 180h1v1h-1zM132 0h1v1h-1zM132 9h1v1h-1zM132 19h1v1h-1zM132 28h1v1h-1zM132 38h1v1h-1zM132 47h1v1h-1zM132 57h1v1h-1zM132 66h1v1h-1zM132 76h1v1h-1zM132 85h1v1h-1zM132 94h1v1h-1zM132 104h1v1h-1zM132 113h1v1h-1zM132 123h1v1h-1zM132 132h1v1h-1zM132 142h1v1h-1zM132 151h1v1h-1zM132 161h1v1h-1zM132 170h1v1h-1zM132 180h1v1h-1zM142 0h1v1h-1zM142 9h1v1h-1zM142 19h1v1h-1zM142 28h1v1h-1zM142 38h1v1h-1zM142 47h1v1h-1zM142 57h1v1h-1zM142 66h1v1h-1zM142 76h1v1h-1zM142 85h1v1h-1zM142 94h1v1h-1zM142 104h1v1h-1zM142 113h1v1h-1zM142 123h1v1h-1zM142 132h1v1h-1zM142 142h1v1h-1zM142 151h1v1h-1zM142 161h1v1h-1zM142 170h1v1h-1zM142 180h1v1h-1zM151 0h1v1h-1zM151 9h1v1h-1zM151 19h1v1h-1zM151 28h1v1h-1zM151 38h1v1h-1zM151 47h1v1h-1zM151 57h1v1h-1zM151 66h1v1h-1zM151 76h1v1h-1zM151 85h1v1h-1zM151 94h1v1h-1zM151 104h1v1h-1zM151 113h1v1h-1zM151 123h1v1h-1zM151 132h1v1h-1zM151 142h1v1h-1zM151 151h1v1h-1zM151 161h1v1h-1zM151 170h1v1h-1zM151 180h1v1h-1zM161 0h1v1h-1zM161 9h1v1h-1zM161 19h1v1h-1zM161 28h1v1h-1zM161 38h1v1h-1zM161 47h1v1h-1zM161 57h1v1h-1zM161 66h1v1h-1zM161 76h1v1h-1zM161 85h1v1h-1zM161 94h1v1h-1zM161 104h1v1h-1zM161 113h1v1h-1zM161 123h1v1h-1zM161 132h1v1h-1zM161 142h1v1h-1zM161 151h1v1h-1zM161 161h1v1h-1zM161 170h1v1h-1zM161 180h1v1h-1zM170 0h1v1h-1zM170 9h1v1h-1zM170 19h1v1h-1zM170 28h1v1h-1zM170 38h1v1h-1zM170 47h1v1h-1zM170 57h1v1h-1zM170 66h1v1h-1zM170 76h1v1h-1zM170 85h1v1h-1zM170 94h1v1h-1zM170 104h1v1h-1zM170 113h1v1h-1zM170 123h1v1h-1zM170 132h1v1h-1zM170 142h1v1h-1zM170 151h1v1h-1zM170 161h1v1h-1zM170 170h1v1h-1zM170 180h1v1h-1zM180 0h1v1h-1zM180 9h1v1h-1zM180 19h1v1h-1zM180 28h1v1h-1zM180 38h1v1h-1zM180 47h1v1h-1zM180 57h1v1h-1zM180 66h1v1h-1zM180 76h1v1h-1zM180 85h1v1h-1zM180 94h1v1h-1zM180 104h1v1h-1zM180 113h1v1h-1zM180 123h1v1h-1zM180 132h1v1h-1zM180 142h1v1h-1zM180 151h1v1h-1zM180 161h1v1h-1zM180 170h1v1h-1zM180 180h1v1h-1z" fill="#c8c8c8"/></pattern><pattern id="g2" x="491" y="428" width="189" height="189" patternUnits="userSpaceOnUse"><path d="M0 0h1v1h-1zM0 9h1v1h-1zM0 19h1v1h-1zM0 28h1v1h-1zM0 38h1v1h-1zM0 47h1v1h-1zM0 57h1v1h-1zM0 66h1v1h-1zM0 76h1v1h-1zM0 85h1v1h-1zM0 94h1v1h-1zM0 104h1v1h-1zM0 113h1v1h-1zM0 123h1v1h-1zM0 132h1v1h-1zM0 142h1v1h-1zM0 151h1v1h-1zM0 161h1v1h-1zM0 170h1v1h-1zM0 180h1v1h-1zM9 0h1v1h-1zM9 9h1v1h-1zM9 19h1v1h-1zM9 28h1v1h-1zM9 38h1v1h-1zM9 47h1v1h-1zM9 57h1v1h-1zM9 66h1v1h-1zM9 76h1v1h-1zM9 85h1v1h-1zM9 94h1v1h-1zM9 104h1v1h-1zM9 113h1v1h-1zM9 123h1v1h-1zM9 132h1v1h-1zM9 142h1v1h-1zM9 151h1v1h-1zM9 161h1v1h-1zM9 170h1v1h-1zM9 180h1v1h-1zM19 0h1v1h-1zM19 9h1v1h-1zM19 19h1v1h-1zM19 28h1v1h-1zM19 38h1v1h-1zM19 47h1v1h-1zM19 57h1v1h-1zM19 66h1v1h-1zM19 76h1v1h-1zM19 85h1v1h-1zM19 94h1v1h-1zM19 104h1v1h-1zM19 113h1v1h-1zM19 123h1v1h-1zM19 132h1v1h-1zM19 142h1v1h-1zM19 151h1v1h-1zM19 161h1v1h-1zM19 170h1v1h-1zM19 180h1v1h-1zM28 0h1v1h-1zM28 9h1v1h-1zM28 19h1v1h-1zM28 28h1v1h-1zM28 38h1v1h-1zM28 47h1v1h-1zM28 57h1v1h-1zM28 66h1v1h-1zM28 76h1v1h-1zM28 85h1v1h-1zM28 94h1v1h-1zM28 104h1v1h-1zM28 113h1v1h-1zM28 123h1v1h-1zM28 132h1v1h-1zM28 142h1v1h-1zM28 151h1v1h-1zM28 161h1v1h-1zM28 170h1v1h-1zM28 180h1v1h-1zM38 0h1v1h-1zM38 9h1v1h-1zM38 19h1v1h-1zM38 28h1v1h-1zM38 38h1v1h-1zM38 47h1v1h-1zM38 57h1v1h-1zM38 66h1v1h-1zM38 76h1v1h-1zM38 85h1v1h-1zM38 94h1v1h-1zM38 104h1v1h-1zM38 113h1v1h-1zM38 123h1v1h-1zM38 132h1v1h-1zM38 142h1v1h-1zM38 151h1v1h-1zM38 161h1v1h-1zM38 170h1v1h-1zM38 180h1v1h-1zM47 0h1v1h-1zM47 9h1v1h-1zM47 19h1v1h-1zM47 28h1v1h-1zM47 38h1v1h-1zM47 47h1v1h-1zM47 57h1v1h-1zM47 66h1v1h-1zM47 76h1v1h-1zM47 85h1v1h-1zM47 94h1v1h-1zM47 104h1v1h-1zM47 113h1v1h-1zM47 123h1v1h-1zM47 132h1v1h-1zM47 142h1v1h-1zM47 151h1v1h-1zM47 161h1v1h-1zM47 170h1v1h-1zM47 180h1v1h-1zM57 0h1v1h-1zM57 9h1v1h-1zM57 19h1v1h-1zM57 28h1v1h-1zM57 38h1v1h-1zM57 47h1v1h-1zM57 57h1v1h-1zM57 66h1v1h-1zM57 76h1v1h-1zM57 85h1v1h-1zM57 94h1v1h-1zM57 104h1v1h-1zM57 113h1v1h-1zM57 123h1v1h-1zM57 132h1v1h-1zM57 142h1v1h-1zM57 151h1v1h-1zM57 161h1v1h-1zM57 170h1v1h-1zM57 180h1v1h-1zM66 0h1v1h-1zM66 9h1v1h-1zM66 19h1v1h-1zM66 28h1v1h-1zM66 38h1v1h-1zM66 47h1v1h-1zM66 57h1v1h-1zM66 66h1v1h-1zM66 76h1v1h-1zM66 85h1v1h-1zM66 94h1v1h-1zM66 104h1v1h-1zM66 113h1v1h-1zM66 123h1v1h-1zM66 132h1v1h-1zM66 142h1v1h-1zM66 151h1v1h-1zM66 161h1v1h-1zM66 170h1v1h-1zM66 180h1v1h-1zM76 0h1v1h-1zM76 9h1v1h-1zM76 19h1v1h-1zM76 28h1v1h-1zM76 38h1v1h-1zM76 47h1v1h-1zM76 57h1v1h-1zM76 66h1v1h-1zM76 76h1v1h-1zM76 85h1v1h-1zM76 94h1v1h-1zM76 104h1v1h-1zM76 113h1v1h-1zM76 123h1v1h-1zM76 132h1v1h-1zM76 142h1v1h-1zM76 151h1v1h-1zM76 161h1v1h-1zM76 170h1v1h-1zM76 180h1v1h-1zM85 0h1v1h-1zM85 9h1v1h-1zM85 19h1v1h-1zM85 28h1v1h-1zM85 38h1v1h-1zM85 47h1v1h-1zM85 57h1v1h-1zM85 66h1v1h-1zM85 76h1v1h-1zM85 85h1v1h-1zM85 94h1v1h-1zM85 104h1v1h-1zM85 113h1v1h-1zM85 123h1v1h-1zM85 132h1v1h-1zM85 142h1v1h-1zM85 151h1v1h-1zM85 161h1v1h-1zM85 170h1v1h-1zM85 180h1v1h-1zM94 0h1v1h-1zM94 9h1v1h-1zM94 19h1v1h-1zM94 28h1v1h-1zM94 38h1v1h-1zM94 47h1v1h-1zM94 57h1v1h-1zM94 66h1v1h-1zM94 76h1v1h-1zM94 85h1v1h-1zM94 94h1v1h-1zM94 104h1v1h-1zM94 113h1v1h-1zM94 123h1v1h-1zM94 132h1v1h-1zM94 142h1v1h-1zM94 151h1v1h-1zM94 161h1v1h-1zM94 170h1v1h-1zM94 180h1v1h-1zM104 0h1v1h-1zM104 9h1v1h-1zM104 19h1v1h-1zM104 28h1v1h-1zM104 38h1v1h-1zM104 47h1v1h-1zM104 57h1v1h-1zM104 66h1v1h-1zM104 76h1v1h-1zM104 85h1v1h-1zM104 94h1v1h-1zM104 104h1v1h-1zM104 113h1v1h-1zM104 123h1v1h-1zM104 132h1v1h-1zM104 142h1v1h-1zM104 151h1v1h-1zM104 161h1v1h-1zM104 170h1v1h-1zM104 180h1v1h-1zM113 0h1v1h-1zM113 9h1v1h-1zM113 19h1v1h-1zM113 28h1v1h-1zM113 38h1v1h-1zM113 47h1v1h-1zM113 57h1v1h-1zM113 66h1v1h-1zM113 76h1v1h-1zM113 85h1v1h-1zM113 94h1v1h-1zM113 104h1v1h-1zM113 113h1v1h-1zM113 123h1v1h-1zM113 132h1v1h-1zM113 142h1v1h-1zM113 151h1v1h-1zM113 161h1v1h-1zM113 170h1v1h-1zM113 180h1v1h-1zM123 0h1v1h-1zM123 9h1v1h-1zM123 19h1v1h-1zM123 28h1v1h-1zM123 38h1v1h-1zM123 47h1v1h-1zM123 57h1v1h-1zM123 66h1v1h-1zM123 76h1v1h-1zM123 85h1v1h-1zM123 94h1v1h-1zM123 104h1v1h-1zM123 113h1v1h-1zM123 123h1v1h-1zM123 132h1v1h-1zM123 142h1v1h-1zM123 151h1v1h-1zM123 161h1v1h-1zM123 170h1v1h-1zM123 180h1v1h-1zM132 0h1v1h-1zM132 9h1v1h-1zM132 19h1v1h-1zM132 28h1v1h-1zM132 38h1v1h-1zM132 47h1v1h-1zM132 57h1v1h-1zM132 66h1v1h-1zM132 76h1v1h-1zM132 85h1v1h-1zM132 94h1v1h-1zM132 104h1v1h-1zM132 113h1v1h-1zM132 123h1v1h-1zM132 132h1v1h-1zM132 142h1v1h-1zM132 151h1v1h-1zM132 161h1v1h-1zM132 170h1v1h-1zM132 180h1v1h-1zM142 0h1v1h-1zM142 9h1v1h-1zM142 19h1v1h-1zM142 28h1v1h-1zM142 38h1v1h-1zM142 47h1v1h-1zM142 57h1v1h-1zM142 66h1v1h-1zM142 76h1v1h-1zM142 85h1v1h-1zM142 94h1v1h-1zM142 104h1v1h-1zM142 113h1v1h-1zM142 123h1v1h-1zM142 132h1v1h-1zM142 142h1v1h-1zM142 151h1v1h-1zM142 161h1v1h-1zM142 170h1v1h-1zM142 180h1v1h-1zM151 0h1v1h-1zM151 9h1v1h-1zM151 19h1v1h-1zM151 28h1v1h-1zM151 38h1v1h-1zM151 47h1v1h-1zM151 57h1v1h-1zM151 66h1v1h-1zM151 76h1v1h-1zM151 85h1v1h-1zM151 94h1v1h-1zM151 104h1v1h-1zM151 113h1v1h-1zM151 123h1v1h-1zM151 132h1v1h-1zM151 142h1v1h-1zM151 151h1v1h-1zM151 161h1v1h-1zM151 170h1v1h-1zM151 180h1v1h-1zM161 0h1v1h-1zM161 9h1v1h-1zM161 19h1v1h-1zM161 28h1v1h-1zM161 38h1v1h-1zM161 47h1v1h-1zM161 57h1v1h-1zM161 66h1v1h-1zM161 76h1v1h-1zM161 85h1v1h-1zM161 94h1v1h-1zM161 104h1v1h-1zM161 113h1v1h-1zM161 123h1v1h-1zM161 132h1v1h-1zM161 142h1v1h-1zM161 151h1v1h-1zM161 161h1v1h-1zM161 170h1v1h-1zM161 180h1v1h-1zM170 0h1v1h-1zM170 9h1v1h-1zM170 19h1v1h-1zM170 28h1v1h-1zM170 38h1v1h-1zM170 47h1v1h-1zM170 57h1v1h-1zM170 66h1v1h-1zM170 76h1v1h-1zM170 85h1v1h-1zM170 94h1v1h-1zM170 104h1v1h-1zM170 113h1v1h-1zM170 123h1v1h-1zM170 132h1v1h-1zM170 142h1v1h-1zM170 151h1v1h-1zM170 161h1v1h-1zM170 170h1v1h-1zM170 180h1v1h-1zM180 0h1v1h-1zM180 9h1v1h-1zM180 19h1v1h-1zM180 28h1v1h-1zM180 38h1v1h-1zM180 47h1v1h-1zM180 57h1v1h-1zM180 66h1v1h-1zM180 76h1v1h-1zM180 85h1v1h-1zM180 94h1v1h-1zM180 104h1v1h-1zM180 113h1v1h-1zM180 123h1v1h-1zM180 132h1v1h-1zM180 142h1v1h-1zM180 151h1v1h-1zM180 161h1v1h-1zM180 170h1v1h-1zM180 180h1v1h-1z" fill="#c8c8c8"/></pattern></defs>
<rect x="491" y="321" width="718" height="97" fill="url(#g1)"/>
<rect x="491" y="428" width="718" height="451" fill="url(#g2)"/>
<rect x="491" y="889" width="718" height="40" fill="url(#g2)"/>
<rect x="491" y="418" width="718" height="10" fill="#ebebeb"/>
<rect x="491" y="879" width="718" height="10" fill="#ebebeb"/>
<rect x="491" y="414" width="718" height="3" fill="#636363"/>
<rect x="491" y="671" width="718" height="3" fill="#636363"/>
<rect x="491" y="795" width="718" height="3" fill="#636363"/>
<rect x="491" y="887" width="718" height="3" fill="#636363"/>
<rect x="491" y="428" width="718" height="28" fill="#ebebeb"/>
<rect x="491" y="674" width="718" height="28" fill="#ebebeb"/>
<rect x="491" y="798" width="718" height="26.5" fill="#ebebeb"/>
<rect x="491" y="890" width="718" height="40" fill="#ebebeb"/>
<g stroke="#8c8c8c" stroke-width="1" stroke-dasharray="4 2" fill="none">
<path d="M491 320.5 H1209"/>
<path d="M490.5 321 V930 M1209.5 321 V930"/>
</g>
<path d="M500.5 335V330.5H505 M571 330.5H575.5V335 M500.5 401V405.5H505 M571 405.5H575.5V401M491.5 344V339.5H496 M581 339.5H585.5V344 M491.5 354V358.5H496 M581 358.5H585.5V354M576.5 335V330.5H581 M1006 330.5H1010.5V335 M576.5 401V405.5H581 M1006 405.5H1010.5V401M1095.5 326V321.5H1100 M1166 321.5H1170.5V326 M1095.5 372V376.5H1100 M1166 376.5H1170.5V372M1058.5 382V377.5H1063 M1204 377.5H1208.5V382 M1058.5 391V395.5H1063 M1204 395.5H1208.5V391M491.5 433V428.5H496 M1204 428.5H1208.5V433 M491.5 451V455.5H496 M1204 455.5H1208.5V451M491.5 461V456.5H496 M836 456.5H840.5V461 M491.5 527V531.5H496 M836 531.5H840.5V527M1011.5 461V456.5H1016 M1185 456.5H1189.5V461 M1011.5 470V474.5H1016 M1185 474.5H1189.5V470M1011.5 480V475.5H1016 M1185 475.5H1189.5V480 M1011.5 489V493.5H1016 M1185 493.5H1189.5V489M1011.5 499V494.5H1016 M1185 494.5H1189.5V499 M1011.5 507V511.5H1016 M1185 511.5H1189.5V507M1011.5 517V512.5H1016 M1185 512.5H1189.5V517 M1011.5 526V530.5H1016 M1185 530.5H1189.5V526M491.5 556V551.5H496 M505 551.5H509.5V556 M491.5 565V569.5H496 M505 569.5H509.5V565M519.5 556V551.5H524 M590 551.5H594.5V556 M519.5 565V569.5H524 M590 569.5H594.5V565M595.5 556V551.5H600 M1185 551.5H1189.5V556 M595.5 565V569.5H600 M1185 569.5H1189.5V565M491.5 584V579.5H496 M505 579.5H509.5V584 M491.5 593V597.5H496 M505 597.5H509.5V593M519.5 584V579.5H524 M590 579.5H594.5V584 M519.5 593V597.5H524 M590 597.5H594.5V593M595.5 584V579.5H600 M1185 579.5H1189.5V584 M595.5 593V597.5H600 M1185 597.5H1189.5V593M491.5 612V607.5H496 M505 607.5H509.5V612 M491.5 621V625.5H496 M505 625.5H509.5V621M519.5 612V607.5H524 M590 607.5H594.5V612 M519.5 621V625.5H524 M590 625.5H594.5V621M595.5 612V607.5H600 M826 607.5H830.5V612 M595.5 621V625.5H600 M826 625.5H830.5V621M850.5 612V607.5H855 M864 607.5H868.5V612 M850.5 621V625.5H855 M864 625.5H868.5V621M878.5 612V607.5H883 M949 607.5H953.5V612 M878.5 621V625.5H883 M949 625.5H953.5V621M954.5 612V607.5H959 M1185 607.5H1189.5V612 M954.5 621V625.5H959 M1185 625.5H1189.5V621M491.5 641V636.5H496 M505 636.5H509.5V641 M491.5 650V654.5H496 M505 654.5H509.5V650M519.5 641V636.5H524 M590 636.5H594.5V641 M519.5 650V654.5H524 M590 654.5H594.5V650M595.5 641V636.5H600 M826 636.5H830.5V641 M595.5 650V654.5H600 M826 654.5H830.5V650M850.5 641V636.5H855 M864 636.5H868.5V641 M850.5 650V654.5H855 M864 654.5H868.5V650M878.5 641V636.5H883 M949 636.5H953.5V641 M878.5 650V654.5H883 M949 654.5H953.5V650M954.5 641V636.5H959 M1185 636.5H1189.5V641 M954.5 650V654.5H959 M1185 654.5H1189.5V650M491.5 679V674.5H496 M1204 674.5H1208.5V679 M491.5 697V701.5H496 M1204 701.5H1208.5V697M491.5 725V720.5H496 M505 720.5H509.5V725 M491.5 735V739.5H496 M505 739.5H509.5V735M519.5 725V720.5H524 M646 720.5H650.5V725 M519.5 735V739.5H524 M646 739.5H650.5V735M651.5 725V720.5H656 M826 720.5H830.5V725 M651.5 735V739.5H656 M826 739.5H830.5V735M850.5 725V720.5H855 M864 720.5H868.5V725 M850.5 735V739.5H855 M864 739.5H868.5V735M878.5 725V720.5H883 M1006 720.5H1010.5V725 M878.5 735V739.5H883 M1006 739.5H1010.5V735M1011.5 725V720.5H1016 M1187 720.5H1191.5V725 M1011.5 735V739.5H1016 M1187 739.5H1191.5V735M491.5 753V748.5H496 M505 748.5H509.5V753 M491.5 763V767.5H496 M505 767.5H509.5V763M519.5 753V748.5H524 M646 748.5H650.5V753 M519.5 763V767.5H524 M646 767.5H650.5V763M651.5 753V748.5H656 M826 748.5H830.5V753 M651.5 763V767.5H656 M826 767.5H830.5V763M850.5 753V748.5H855 M864 748.5H868.5V753 M850.5 763V767.5H855 M864 767.5H868.5V763M878.5 753V748.5H883 M1006 748.5H1010.5V753 M878.5 763V767.5H883 M1006 767.5H1010.5V763M1011.5 753V748.5H1016 M1187 748.5H1191.5V753 M1011.5 763V767.5H1016 M1187 767.5H1191.5V763M491.5 803V798.5H496 M1204 798.5H1208.5V803 M491.5 820V824.5H496 M1204 824.5H1208.5V820M491.5 837V832.5H496 M1204 832.5H1208.5V837 M491.5 848V852.5H496 M1204 852.5H1208.5V848M491.5 895V890.5H496 M1204 890.5H1208.5V895 M491.5 913V917.5H496 M1204 917.5H1208.5V913" fill="none" stroke="#c85a5a" stroke-width="1" opacity="0.8"/>
<g fill="#000"><text x="584.5" y="375.5" font-size="20" font-weight="bold" fill="#0a3a8c">Informacje o zgłoszeniu</text><text x="1134.5" y="392.5" font-size="13.33" font-weight="bold" text-anchor="middle" fill="#111">Infonet Projekt SA</text><text x="498.8" y="448.8" font-size="16" font-weight="bold" font-style="italic" fill="#000">Podstawowe informacje</text><text x="499.5" y="500.5" font-size="20" font-weight="bold" fill="#000">[Issues.Number]</text><clipPath id="cz"><rect x="1011" y="456" width="190" height="80"/></clipPath><g clip-path="url(#cz)"><text x="1184" y="462" font-size="10.67" font-style="italic" text-anchor="end" fill="#111">Źródło zgłoszenia</text><text x="1186" y="488" font-size="13.33" font-weight="bold" text-anchor="end" fill="#000">[Issues.CommunicationChannelName]</text></g><text x="1187" y="512" font-size="10.67" font-style="italic" text-anchor="end" fill="#111">Data utworzenia</text><text x="1186" y="525.5" font-size="13.33" font-weight="bold" text-anchor="end" fill="#000">[Issues.CreatedDate]</text><text x="526.5" y="563.8" font-size="13.33" font-weight="bold" font-style="italic">Temat</text><text x="601.2" y="563.8" font-size="13.33">[Issues.Subject]</text><text x="526.5" y="591.9" font-size="13.33" font-weight="bold" font-style="italic">Kategoria</text><text x="601.2" y="591.9" font-size="13.33">[Issues.IssueCategoryName]</text><text x="526.5" y="621" font-size="13.33" font-weight="bold" font-style="italic">Status</text><text x="601.2" y="621" font-size="13.33">[Issues.IssueStatusName]</text><text x="526.5" y="648.5" font-size="13.33" font-weight="bold" font-style="italic">Priorytet</text><text x="601.2" y="648.5" font-size="13.33">[Issues.IssuePriorityName]</text><text x="885" y="621" font-size="13.33" font-weight="bold" font-style="italic">Wpływ</text><text x="960" y="621" font-size="13.33">[Issues.IssueImpactName]</text><text x="885" y="648.7" font-size="13.33" font-weight="bold" font-style="italic">Pilność</text><text x="960" y="648.7" font-size="13.33">[Issues.IssueUrgencyName]</text><text x="498.8" y="694.7" font-size="16" font-weight="bold" font-style="italic">Powiązane osoby</text><text x="526.5" y="734.2" font-size="13.33" font-weight="bold" font-style="italic">Zgłaszający</text><text x="657.6" y="734.2" font-size="13.33">[Issues.ReporterFullName]</text><text x="526.5" y="762" font-size="13.33" font-weight="bold" font-style="italic">Autor</text><text x="657.6" y="762" font-size="13.33">[Issues.AuthorFullName]</text><text x="885" y="734" font-size="13.33" font-weight="bold" font-style="italic">Grupa opiekunów</text><text x="885" y="761.5" font-size="13.33" font-weight="bold" font-style="italic">Opiekunowie</text><clipPath id="cv"><rect x="1007" y="700" width="186" height="80"/></clipPath><g clip-path="url(#cv)"><text x="1016.3" y="734" font-size="13.33">[Issues.AssigneeGroupName]</text><text x="1016.3" y="761.5" font-size="13.33">[Issues.AssigneePersonName]</text></g><text x="498.8" y="817.5" font-size="16" font-weight="bold" font-style="italic">Opis</text><text x="793.8" y="847" font-size="13.33">[Issues.Description]</text><text x="498.9" y="911.2" font-size="16" font-weight="bold">Uprawnienia / Dostępy</text></g>
<circle cx="537.9" cy="358.5" r="19" fill="#000"/><path d="M520 376 Q526 366 538 365.5 Q548 366 553 371 L560 376 Z" fill="#fff"/><path d="M560 370 Q554 374.5 543 373.5" fill="none" stroke="#fff" stroke-width="10" stroke-linecap="round"/><path d="M512.6 361.5 A26 26 0 1 1 561 369.5 Q555 374 545 373.5" fill="none" stroke="#9a9a9a" stroke-width="4.6" stroke-linecap="round"/><rect x="531.3" y="368.4" width="14.2" height="8.8" rx="4.4" fill="#9a9a9a"/><path d="M505 400 C505 388 515 382 525 382 C530 382 534 384.5 538.5 384.5 C543 384.5 547 382 552 382 C562 382 571 388 571 400 C571 404 569.5 406 566 406 L510 406 C506.5 406 505 404 505 400 Z" fill="#000"/><defs><linearGradient id="lg1" x1="0" y1="0" x2="0" y2="1"><stop offset="0" stop-color="#c8c8c8"/><stop offset="1" stop-color="#555"/></linearGradient><linearGradient id="lg2" x1="0" y1="0" x2="1" y2="1"><stop offset="0" stop-color="#3a90c0"/><stop offset="1" stop-color="#1a4a70"/></linearGradient></defs><defs><linearGradient id="lg3" x1="0" y1="1" x2="1" y2="0"><stop offset="0" stop-color="#1a98d0"/><stop offset="1" stop-color="#174860"/></linearGradient></defs><path d="M1129 325.1 L1129.3 353 L1127 358 L1120.2 360.5 Z" fill="#7a7a7a"/><path d="M1129 325.1 L1151.6 348.3 L1143.2 343.3 L1131.4 336.2 Z" fill="#1c5a78"/><path d="M1143.2 343.3 L1151.6 348.3 L1145.5 350 Z" fill="#7a7a7a"/><path d="M1151.6 348.3 L1117.2 371.6 L1120.2 360 L1127 357.5 L1145.5 350 Z" fill="url(#lg3)"/><circle cx="500.3" cy="560" r="7.2" fill="none" stroke="#9a9a9a" stroke-width="5"/><g stroke="#000" stroke-width="3"><path d="M493.8 553.5 L497.8 557.5 M506.8 553.5 L502.8 557.5 M493.8 566.5 L497.8 562.5 M506.8 566.5 L502.8 562.5"/></g><rect x="491.5" y="581.5" width="6" height="5.5" fill="none" stroke="#9a9a9a" stroke-width="1.3"/><rect x="502.5" y="589" width="6" height="5.5" fill="none" stroke="#9a9a9a" stroke-width="1.3"/><rect x="496.2" y="583.8" width="8.8" height="8.8" rx="1.4" fill="#000"/><rect x="491" y="607.5" width="2.6" height="19" fill="#000"/><path d="M494 610 Q498 609 501.5 611 Q505.5 612.5 509.5 611 L509.5 623 Q505.5 624.5 501.5 623 Q498 621.5 494 622.5 Z" fill="#9a9a9a"/><g stroke="#9a9a9a" stroke-width="1.6"><path d="M497 638.5 H509 M497 645 H509 M497 651.2 H509"/></g><g font-size="5.4" font-weight="bold" fill="#000"><text x="490.5" y="640.5">1</text><text x="490.5" y="646.5">2</text><text x="490.5" y="652.5">3</text></g><g stroke-width="2.2" fill="none"><path d="M851.5 607.5 L857 613" stroke="#000"/><path d="M858.5 609.5 V614.5 H853.5" stroke="#000"/><path d="M868 624.5 L862.5 619" stroke="#000"/><path d="M861 622.5 V617.5 H866" stroke="#000"/><path d="M868 607.5 L862.5 613" stroke="#9a9a9a"/><path d="M861 609.5 V614.5 H866" stroke="#9a9a9a"/><path d="M851.5 624.5 L857 619" stroke="#9a9a9a"/><path d="M858.5 622.5 V617.5 H853.5" stroke="#9a9a9a"/></g><path d="M857 636 H862 L861 646.6 H858 Z" fill="#000"/><circle cx="859.5" cy="651.5" r="2.5" fill="#9a9a9a"/><circle cx="497.4" cy="726.1" r="3.7" fill="#000"/><path d="M491.59999999999997 737.5 L491.59999999999997 733.8 Q491.59999999999997 731.3 494.59999999999997 731.3 L500.2 731.3 Q503.2 731.3 503.2 733.8 L503.2 737.5 Z" fill="#000"/><path d="M502.5 734 L506 730.5 L509.5 734.5 L506 738 Z" fill="#9a9a9a"/><rect x="500.5" y="736" width="3" height="2" fill="#fff"/><circle cx="497.4" cy="754.4" r="3.7" fill="#000"/><path d="M491.59999999999997 765.7 L491.59999999999997 762.0 Q491.59999999999997 759.5 494.59999999999997 759.5 L500.2 759.5 Q503.2 759.5 503.2 762.0 L503.2 765.7 Z" fill="#000"/><path d="M502 765.5 L509 758.5" stroke="#fff" stroke-width="4"/><path d="M502.5 765 L509.5 758" stroke="#9a9a9a" stroke-width="2.6"/><path d="M852 728.5 V724.2 H867 V728.5" fill="none" stroke="#9a9a9a" stroke-width="1.4"/><circle cx="852.8" cy="731" r="2.3" fill="#000"/><path d="M850.1999999999999 737.6 V736 Q850.1999999999999 734 852.8 734 Q855.4 734 855.4 736 V737.6 Z" fill="#000"/><circle cx="859.5" cy="731" r="2.3" fill="#000"/><path d="M856.9 737.6 V736 Q856.9 734 859.5 734 Q862.1 734 862.1 736 V737.6 Z" fill="#000"/><circle cx="866.2" cy="731" r="2.3" fill="#000"/><path d="M863.6 737.6 V736 Q863.6 734 866.2 734 Q868.8000000000001 734 868.8000000000001 736 V737.6 Z" fill="#000"/><circle cx="852.8" cy="755.5" r="2.2" fill="#a8a8a8"/><path d="M849.8 762.5 L849.8 761.5 Q849.8 759 852.8 759 L852.8 759 Q855.8 759 855.8 761.5 L855.8 762.5 Z" fill="#a8a8a8"/><circle cx="866.2" cy="755.5" r="2.2" fill="#a8a8a8"/><path d="M863.2 762.5 L863.2 761.5 Q863.2 759 866.2 759 L866.2 759 Q869.2 759 869.2 761.5 L869.2 762.5 Z" fill="#a8a8a8"/><path d="M853.6 766 V762 Q853.6 759.5 856.5 759.5 H862.5 Q865.4 759.5 865.4 762 V766 Z" fill="#fff"/><circle cx="859.5" cy="755" r="3.1" fill="#000"/><path d="M854.1 765.5 L854.1 763.0 Q854.1 760.5 857.1 760.5 L861.9 760.5 Q864.9 760.5 864.9 763.0 L864.9 765.5 Z" fill="#000"/>
<g>
<text x="714.6" y="475.4" font-size="13.33" fill="#000">test</text>
<path d="M755.4 443.4 V462.5" stroke="#c0504d" stroke-width="1.2"/>
<circle cx="755.4" cy="443.4" r="5.1" fill="#c0504d"/>
<circle cx="709.7" cy="462.5" r="5.1" fill="#c0504d"/>
<circle cx="755.4" cy="462.5" r="5.1" fill="#c0504d"/>
<circle cx="802.8" cy="462.5" r="5.1" fill="#c0504d"/>
<circle cx="709.7" cy="481.3" r="5.1" fill="#c0504d"/>
<circle cx="755.4" cy="481.3" r="5.1" fill="#c0504d"/>
<circle cx="802.8" cy="481.3" r="5.1" fill="#c0504d"/>
</g></svg>
<!-- left panel icons -->
<svg class="a" style="left:320px;top:297px" width="46" height="520" viewBox="0 0 46 520">
 <rect x="12.5" y="21.5" width="12" height="11" fill="#eef2f8" stroke="#7a8aa8"/>
 <path d="M15 24.5 H22 M15 27 H22 M15 29.5 H22" stroke="#5a6a88" stroke-width="1"/>
 <path d="M18 67 L23 67 L19 73 L23 73 L15 82 L17.5 75.5 L14 75.5 Z" fill="#f0c030" stroke="#c08010" stroke-width="0.8"/>
 <rect x="13" y="111" width="4" height="4" fill="#7aa8e8"/>
 <path d="M15 115 V125 H19 M15 120 H19" stroke="#999" fill="none"/>
 <rect x="19" y="118" width="4" height="4" fill="#40b040"/><rect x="19" y="124" width="4" height="4" fill="#40b040"/>
 <rect x="12.5" y="159" width="11" height="14" rx="4" fill="#f0c850" stroke="#b08820"/>
 <ellipse cx="18" cy="162" rx="5" ry="2" fill="#f8e090" stroke="#b08820" stroke-width="0.8"/>
 <rect x="13.5" y="204.5" width="9" height="11" fill="#e8ecf4" stroke="#8a98b0"/>
 <rect x="17.5" y="209.5" width="9" height="11" fill="#e8ecf4" stroke="#8a98b0"/>
 <path d="M10 484 L10 502 L26 493 Z" fill="#5a7cb4"/>
</svg>
<!-- highlight on selected object -->
<div class="a" style="left:703px;top:428px;width:110px;height:63px;border:4px solid #90d33f;border-radius:7px;box-shadow:2px 3px 6px rgba(0,0,0,0.35), inset 1px 2px 7px rgba(0,0,0,0.38)"></div>
<!-- green arrow -->
<svg class="a" style="left:340px;top:170px;filter:drop-shadow(3px 4px 4px rgba(0,0,0,0.42))" width="170" height="140" viewBox="340 170 170 140">
 <path d="M360.4 187.8 L387.9 195 L382.6 198.3 L486.8 285 L485.8 286.8 L375.5 208 L373.5 212.6 Z" fill="#90d23f"/>
</svg>

<div id="sbar" class="a">
  <div class="a" style="left:2px;top:17px;width:13px;height:688px;background:#c1c1c1"></div>
  <div class="a" style="left:5px;top:7px;width:0;height:0;border-left:3.5px solid transparent;border-right:3.5px solid transparent;border-bottom:4px solid #a3a3a3"></div>
  <div class="a" style="left:5px;top:908px;width:0;height:0;border-left:3.5px solid transparent;border-right:3.5px solid transparent;border-top:4px solid #505050"></div>
</div>

</body></html>
